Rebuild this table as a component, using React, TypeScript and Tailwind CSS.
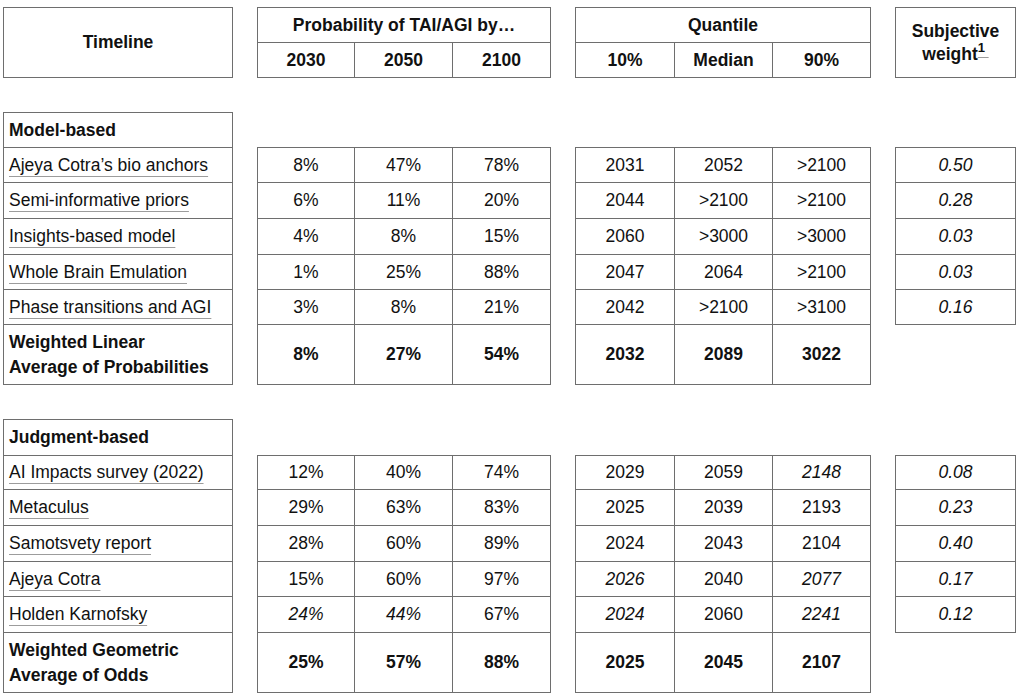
type V = { t: string; i?: boolean; b?: boolean };

const v = (t: string, i = false): V => ({ t, i });
const bold = (t: string): V => ({ t, b: true });

type Row = { name: string; prob: V[]; quant: V[]; weight: string };

const modelRows: Row[] = [
  { name: 'Ajeya Cotra\u2019s bio anchors', prob: [v('8%'), v('47%'), v('78%')], quant: [v('2031'), v('2052'), v('>2100')], weight: '0.50' },
  { name: 'Semi-informative priors', prob: [v('6%'), v('11%'), v('20%')], quant: [v('2044'), v('>2100'), v('>2100')], weight: '0.28' },
  { name: 'Insights-based model', prob: [v('4%'), v('8%'), v('15%')], quant: [v('2060'), v('>3000'), v('>3000')], weight: '0.03' },
  { name: 'Whole Brain Emulation', prob: [v('1%'), v('25%'), v('88%')], quant: [v('2047'), v('2064'), v('>2100')], weight: '0.03' },
  { name: 'Phase transitions and AGI', prob: [v('3%'), v('8%'), v('21%')], quant: [v('2042'), v('>2100'), v('>3100')], weight: '0.16' },
];

const judgmentRows: Row[] = [
  { name: 'AI Impacts survey (2022)', prob: [v('12%'), v('40%'), v('74%')], quant: [v('2029'), v('2059'), v('2148', true)], weight: '0.08' },
  { name: 'Metaculus', prob: [v('29%'), v('63%'), v('83%')], quant: [v('2025'), v('2039'), v('2193')], weight: '0.23' },
  { name: 'Samotsvety report', prob: [v('28%'), v('60%'), v('89%')], quant: [v('2024'), v('2043'), v('2104')], weight: '0.40' },
  { name: 'Ajeya Cotra', prob: [v('15%'), v('60%'), v('97%')], quant: [v('2026', true), v('2040'), v('2077', true)], weight: '0.17' },
  { name: 'Holden Karnofsky', prob: [v('24%', true), v('44%', true), v('67%')], quant: [v('2024', true), v('2060'), v('2241', true)], weight: '0.12' },
];

function Cell({ value }: { value: V }) {
  return (
    <div className="flex items-center justify-center bg-white">
      <span className={value.b ? 'font-bold' : value.i ? 'italic' : ''}>{value.t}</span>
    </div>
  );
}

function NameCell({ name }: { name: string }) {
  return (
    <div className="flex items-center bg-white pl-[5px]">
      <span className="underline decoration-[#9c9c9c] decoration-1 underline-offset-[5px]">{name}</span>
    </div>
  );
}

function SectionHead({ label }: { label: string }) {
  return (
    <div className="flex items-center bg-white pl-[5px] font-bold">{label}</div>
  );
}

function SummaryHead({ lines }: { lines: string[] }) {
  return (
    <div className="flex flex-col justify-center bg-white pl-[5px] font-bold leading-[25px]">
      {lines.map((l) => (
        <span key={l}>{l}</span>
      ))}
    </div>
  );
}

export default function App() {
  const modelProb = [...modelRows.map((r) => r.prob), [bold('8%'), bold('27%'), bold('54%')]];
  const modelQuant = [...modelRows.map((r) => r.quant), [bold('2032'), bold('2089'), bold('3022')]];
  const judgProb = [...judgmentRows.map((r) => r.prob), [bold('25%'), bold('57%'), bold('88%')]];
  const judgQuant = [...judgmentRows.map((r) => r.quant), [bold('2025'), bold('2045'), bold('2107')]];

  return (
    <div className="min-h-[696px] bg-white pl-[3px] pt-[7px] font-['Liberation_Sans',Arial,sans-serif] text-[17.5px] text-[#111]">
      <div className="flex flex-col gap-[34px]">
        {/* header */}
        <div className="flex items-start gap-[24px]">
          <div className="grid h-[71px] w-[230px] border border-[#6e6e6e]">
            <div className="flex items-center justify-center font-bold">Timeline</div>
          </div>
          <div className="grid w-[294px] grid-cols-[96px_97px_97px] grid-rows-[34px_34px] gap-px border border-[#6e6e6e] bg-[#6e6e6e] font-bold">
            <div className="col-span-3 flex items-center justify-center bg-white">Probability of TAI/AGI by…</div>
            <Cell value={bold('2030')} />
            <Cell value={bold('2050')} />
            <Cell value={bold('2100')} />
          </div>
          <div className="grid w-[296px] grid-cols-[98px_97px_97px] grid-rows-[34px_34px] gap-px border border-[#6e6e6e] bg-[#6e6e6e] font-bold">
            <div className="col-span-3 flex items-center justify-center bg-white">Quantile</div>
            <Cell value={bold('10%')} />
            <Cell value={bold('Median')} />
            <Cell value={bold('90%')} />
          </div>
          <div className="flex h-[71px] w-[121px] flex-col items-center justify-center border border-[#6e6e6e] font-bold leading-[23px]">
            <span>Subjective</span>
            <span>
              weight
              <sup className="relative -top-[1px] align-super text-[13px] underline decoration-[#9c9c9c] decoration-1 underline-offset-[5px]">1&nbsp;</sup>
            </span>
          </div>
        </div>

        {/* model-based */}
        <div className="flex items-start gap-[24px]">
          <div className="grid w-[230px] grid-rows-[34px_34px_35px_35px_34px_34px_59px] gap-px border border-[#6e6e6e] bg-[#6e6e6e]">
            <SectionHead label="Model-based" />
            {modelRows.map((r) => (
              <NameCell key={r.name} name={r.name} />
            ))}
            <SummaryHead lines={['Weighted Linear', 'Average of Probabilities']} />
          </div>
          <div className="mt-[35px] grid w-[294px] grid-cols-[96px_97px_97px] grid-rows-[34px_35px_35px_34px_34px_59px] gap-px border border-[#6e6e6e] bg-[#6e6e6e]">
            {modelProb.flat().map((c, k) => (
              <Cell key={k} value={c} />
            ))}
          </div>
          <div className="mt-[35px] grid w-[296px] grid-cols-[98px_97px_97px] grid-rows-[34px_35px_35px_34px_34px_59px] gap-px border border-[#6e6e6e] bg-[#6e6e6e]">
            {modelQuant.flat().map((c, k) => (
              <Cell key={k} value={c} />
            ))}
          </div>
          <div className="mt-[35px] grid w-[121px] grid-rows-[34px_35px_35px_34px_34px] gap-px border border-[#6e6e6e] bg-[#6e6e6e]">
            {modelRows.map((r) => (
              <Cell key={r.name} value={v(r.weight, true)} />
            ))}
          </div>
        </div>

        {/* judgment-based */}
        <div className="flex items-start gap-[24px]">
          <div className="grid w-[230px] grid-rows-[35px_33px_35px_35px_34px_35px_59px] gap-px border border-[#6e6e6e] bg-[#6e6e6e]">
            <SectionHead label="Judgment-based" />
            {judgmentRows.map((r) => (
              <NameCell key={r.name} name={r.name} />
            ))}
            <SummaryHead lines={['Weighted Geometric', 'Average of Odds']} />
          </div>
          <div className="mt-[36px] grid w-[294px] grid-cols-[96px_97px_97px] grid-rows-[33px_35px_35px_34px_35px_59px] gap-px border border-[#6e6e6e] bg-[#6e6e6e]">
            {judgProb.flat().map((c, k) => (
              <Cell key={k} value={c} />
            ))}
          </div>
          <div className="mt-[36px] grid w-[296px] grid-cols-[98px_97px_97px] grid-rows-[33px_35px_35px_34px_35px_59px] gap-px border border-[#6e6e6e] bg-[#6e6e6e]">
            {judgQuant.flat().map((c, k) => (
              <Cell key={k} value={c} />
            ))}
          </div>
          <div className="mt-[36px] grid w-[121px] grid-rows-[33px_35px_35px_34px_35px] gap-px border border-[#6e6e6e] bg-[#6e6e6e]">
            {judgmentRows.map((r) => (
              <Cell key={r.name} value={v(r.weight, true)} />
            ))}
          </div>
        </div>
      </div>
    </div>
  );
}
